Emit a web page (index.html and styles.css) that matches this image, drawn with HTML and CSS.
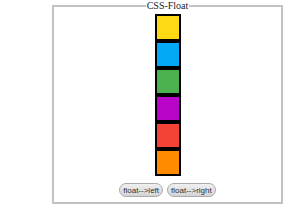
FILE: index.html
```html
<!DOCTYPE html>
<html>
<head>
    <link rel="stylesheet" href="styles.css">
</head>
<body>
    <fieldset class="stage">
        <legend class="title">CSS-Float</legend>
        <div class="column" id="column">
            <div class="box yellow"></div>
            <div class="box blue"></div>
            <div class="box green"></div>
            <div class="box purple"></div>
            <div class="box red"></div>
            <div class="box orange"></div>
        </div>
        <div class="controls">
            <button class="button" id="leftButton">float--&gt;left</button>
            <button class="button" id="rightButton">float--&gt;right</button>
        </div>
    </fieldset>
</body>
</html>
```

FILE: styles.css
```css
body {
    margin: 0;
    background: white;
}

.stage {
    box-sizing: border-box;
    width: 231px;
    height: 204px;
    margin: 0 0 0 52px;
    padding: 2px 0 0 0;
    border: 2px solid #c2c2c2;
    display: flex;
    flex-direction: column;
    align-items: center;
}

.title {
    margin: 0 auto;
    padding: 0 1px;
    font-family: "Liberation Serif", serif;
    font-size: 10px;
    line-height: 12px;
    color: #222;
}

.column {
    display: flex;
    flex-direction: column;
}

.box {
    width: 22px;
    height: 23px;
    border: 2px solid #000;
}

.yellow { background: #ffd814; }
.blue { background: #03a9f4; }
.green { background: #4caf50; }
.purple { background: #b804c8; }
.red { background: #f44336; }
.orange { background: #ff8c00; }

.controls {
    display: flex;
    gap: 4px;
    margin-top: 7px;
}

.button {
    height: 14px;
    padding: 0 3px;
    font-family: "Liberation Sans", Arial, sans-serif;
    font-size: 8px;
    color: #333;
    background: linear-gradient(#f0f0f0, #d4d4d4);
    border: 1px solid #aaa;
    border-radius: 7px;
    cursor: pointer;
}
```
